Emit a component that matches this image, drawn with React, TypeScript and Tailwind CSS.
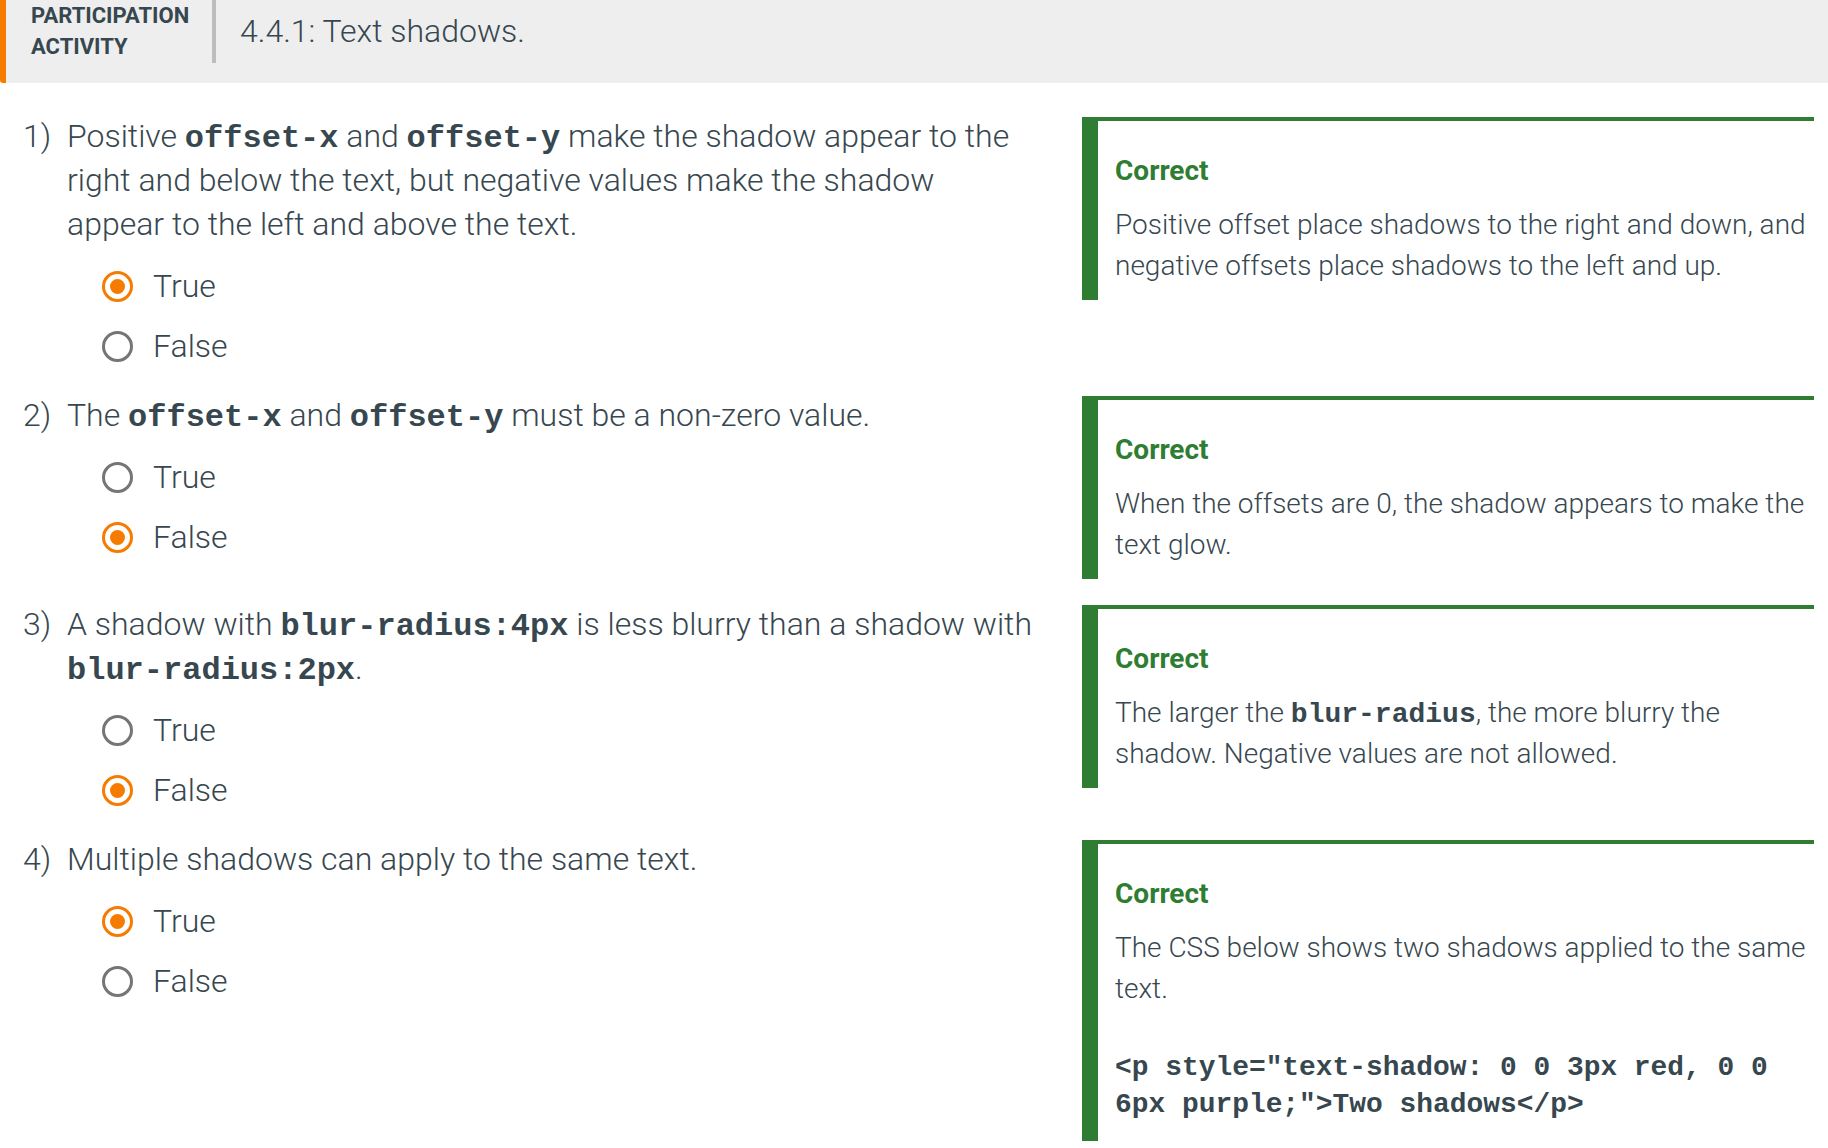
import React from "react";

const Code = ({ children, size }: { children: React.ReactNode; size: "q" | "c" }) => (
  <code
    className={
      size === "q"
        ? "font-['Liberation_Mono',monospace] font-bold text-[32px] leading-none"
        : "font-['Liberation_Mono',monospace] font-bold text-[28px] leading-none"
    }
  >
    {children}
  </code>
);

const Radio = ({ checked }: { checked: boolean }) =>
  checked ? (
    <span className="w-[31px] h-[31px] rounded-full border-[3.5px] border-[#f57c00] flex items-center justify-center shrink-0">
      <span className="w-[15px] h-[15px] rounded-full bg-[#f57c00]" />
    </span>
  ) : (
    <span className="w-[31px] h-[31px] rounded-full border-[3.5px] border-[#757575] shrink-0" />
  );

const Option = ({ label, checked }: { label: string; checked: boolean }) => (
  <div className="h-[60px] flex items-center pl-[35px]">
    <Radio checked={checked} />
    <span className="ml-[20px] text-[32px] leading-[44px] font-light">{label}</span>
  </div>
);

const Card = ({ children }: { children: React.ReactNode }) => (
  <div className="w-[732px] shrink-0 mr-[14px] mt-[3px] mb-[6px] border-t-4 border-l-[16px] border-[#2e7d32] pt-[30px] pb-[14px] pl-[17px] pr-[4px]">
    <div className="text-[28px] leading-[40px] font-bold text-[#2e7d32]">Correct</div>
    <div className="mt-[13px] text-[28px] leading-[41px] font-light">{children}</div>
  </div>
);

const Row = ({
  num,
  question,
  answer,
  feedback,
}: {
  num: string;
  question: React.ReactNode;
  answer: boolean;
  feedback: React.ReactNode;
}) => (
  <div className="flex items-start">
    <div className="flex-1 flex pl-[23px] pr-[46px]">
      <span className="w-[44px] shrink-0 text-[32px] leading-[44px] font-light">{num}</span>
      <div className="flex-1">
        <p className="text-[32px] leading-[44px] font-light">{question}</p>
        <div className="mt-[10px]">
          <Option label="True" checked={answer} />
          <Option label="False" checked={!answer} />
        </div>
      </div>
    </div>
    <Card>{feedback}</Card>
  </div>
);

export default function App() {
  return (
    <div className="w-[1828px] h-[1148px] overflow-hidden bg-white font-['Roboto',sans-serif] text-[#37474f]">
      <header className="h-[83px] bg-[#eeeeee] border-l-[6px] border-[#f57c00] rounded-bl-[3px] flex items-start">
        <div className="ml-[25px] w-[176px] text-[22px] leading-[31px] font-bold uppercase">
          Participation Activity
        </div>
        <div className="ml-[5px] w-[4px] h-[63px] bg-[#bdbdbd]" />
        <div className="ml-[24px] mt-[11px] text-[32px] leading-[40px] font-light">4.4.1: Text shadows.</div>
      </header>

      <main className="pt-[31px] flex flex-col gap-[17px]">
        <Row
          num="1)"
          question={
            <>
              Positive <Code size="q">offset-x</Code> and <Code size="q">offset-y</Code> make the shadow appear to
              the right and below the text, but negative values make the shadow appear to the left and above the
              text.
            </>
          }
          answer={true}
          feedback={
            <>Positive offset place shadows to the right and down, and negative offsets place shadows to the left and up.</>
          }
        />
        <Row
          num="2)"
          question={
            <>
              The <Code size="q">offset-x</Code> and <Code size="q">offset-y</Code> must be a non-zero value.
            </>
          }
          answer={false}
          feedback={<>When the offsets are 0, the shadow appears to make the text glow.</>}
        />
        <Row
          num="3)"
          question={
            <>
              A shadow with <Code size="q">blur-radius:4px</Code> is less blurry than a shadow with{" "}
              <Code size="q">blur-radius:2px</Code>.
            </>
          }
          answer={false}
          feedback={
            <>
              The larger the <Code size="c">blur-radius</Code>, the more blurry the shadow. Negative values are not
              allowed.
            </>
          }
        />
        <Row
          num="4)"
          question={<>Multiple shadows can apply to the same text.</>}
          answer={true}
          feedback={
            <>
              <div>The CSS below shows two shadows applied to the same text.</div>
              <div className="mt-[40px] mb-[4px] font-['Liberation_Mono',monospace] font-bold text-[27.9px] leading-[37px]">
                {'<p style="text-shadow: 0 0 3px red, 0 0 6px purple;">Two shadows</p>'}
              </div>
            </>
          }
        />
      </main>
    </div>
  );
}
